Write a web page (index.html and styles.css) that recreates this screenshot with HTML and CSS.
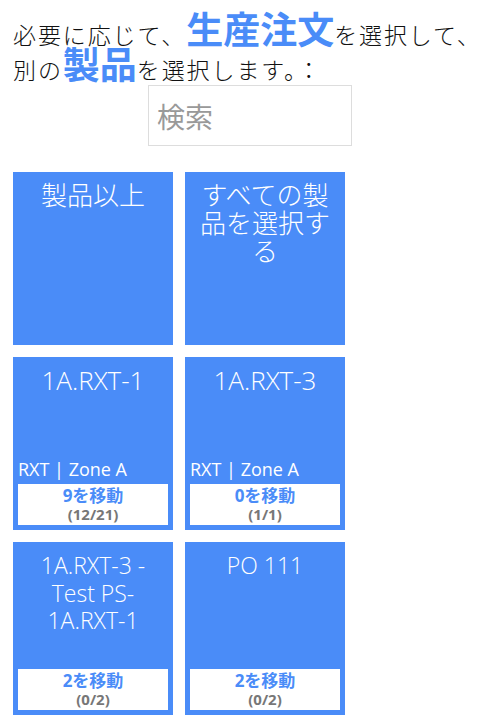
FILE: index.html
```html
<!DOCTYPE html>
<html lang="ja">
<head>
<meta charset="utf-8">
<link rel="stylesheet" href="styles.css">
</head>
<body>
<div class="page">
  <p class="intro">必要に応じて、<strong class="hl">生産注文</strong>を選択して、別の<strong class="hl">製品</strong>を選択します。：</p>
  <input class="search" type="text" placeholder="検索">
  <div class="tiles">
    <div class="tile">
      <div class="tile-title">製品以上</div>
    </div>
    <div class="tile">
      <div class="tile-title">すべての製品を選択する</div>
    </div>
    <div class="tile">
      <div class="tile-title">1A.RXT-1</div>
      <div class="tile-meta">RXT | Zone A</div>
      <div class="tile-count"><div class="move">9を移動</div><div class="ratio">(12/21)</div></div>
    </div>
    <div class="tile">
      <div class="tile-title">1A.RXT-3</div>
      <div class="tile-meta">RXT | Zone A</div>
      <div class="tile-count"><div class="move">0を移動</div><div class="ratio">(1/1)</div></div>
    </div>
    <div class="tile">
      <div class="tile-title tile-title-sm">1A.RXT-3 - Test PS-1A.RXT-1</div>
      <div class="tile-count"><div class="move">2を移動</div><div class="ratio">(0/2)</div></div>
    </div>
    <div class="tile">
      <div class="tile-title tile-title-sm">PO 111</div>
      <div class="tile-count"><div class="move">2を移動</div><div class="ratio">(0/2)</div></div>
    </div>
  </div>
</div>
</body>
</html>
```
FILE: styles.css
```css
html, body {
  margin: 0;
  padding: 0;
  background: #ffffff;
}
.page {
  padding: 17px 13px 0 13px;
}
.intro {
  margin: 0;
  font-family: "Noto Sans CJK JP", sans-serif;
  font-weight: 300;
  font-size: 23px;
  letter-spacing: 1.9px;
  line-height: 35px;
  color: #111;
}
.hl {
  font-weight: 700;
  font-size: 37px;
  line-height: 23px;
  letter-spacing: 0;
  color: #4a8cf8;
}
.search {
  display: block;
  box-sizing: border-box;
  width: 204px;
  height: 61px;
  margin: -2px auto 0;
  border: 1px solid #dddddd;
  padding: 0 8px;
  font-family: "Noto Sans CJK JP", sans-serif;
  font-size: 28px;
  color: #333;
  outline: none;
}
.search::placeholder {
  color: #999999;
}
.tiles {
  display: grid;
  grid-template-columns: repeat(2, 160px);
  gap: 12px;
  margin-top: 26px;
}
.tile {
  height: 173px;
  background: #4a8cf8;
  color: #ffffff;
  display: flex;
  flex-direction: column;
}
.tile-title {
  padding: 9px 4px 0;
  text-align: center;
  font-family: "Open Sans", "Noto Sans CJK JP", sans-serif;
  font-weight: 300;
  font-size: 26px;
  line-height: 28px;
}
.tile-title-sm {
  padding-top: 10px;
  font-size: 23px;
  line-height: 27.5px;
}
.tile-meta {
  margin-top: auto;
  padding-left: 5px;
  font-family: "Open Sans", "Noto Sans CJK JP", sans-serif;
  font-size: 18px;
  line-height: 22px;
}
.tile-count {
  margin: 4px 5px 5px;
  height: 41px;
  background: #ffffff;
  text-align: center;
  font-family: "Open Sans", "Noto Sans CJK JP", sans-serif;
  font-weight: 700;
}
.tile-title + .tile-count {
  margin-top: auto;
}
.move {
  color: #4a8cf8;
  font-size: 17px;
  line-height: 20px;
  padding-top: 2px;
}
.ratio {
  color: #777777;
  font-size: 15px;
  line-height: 17px;
}
```
